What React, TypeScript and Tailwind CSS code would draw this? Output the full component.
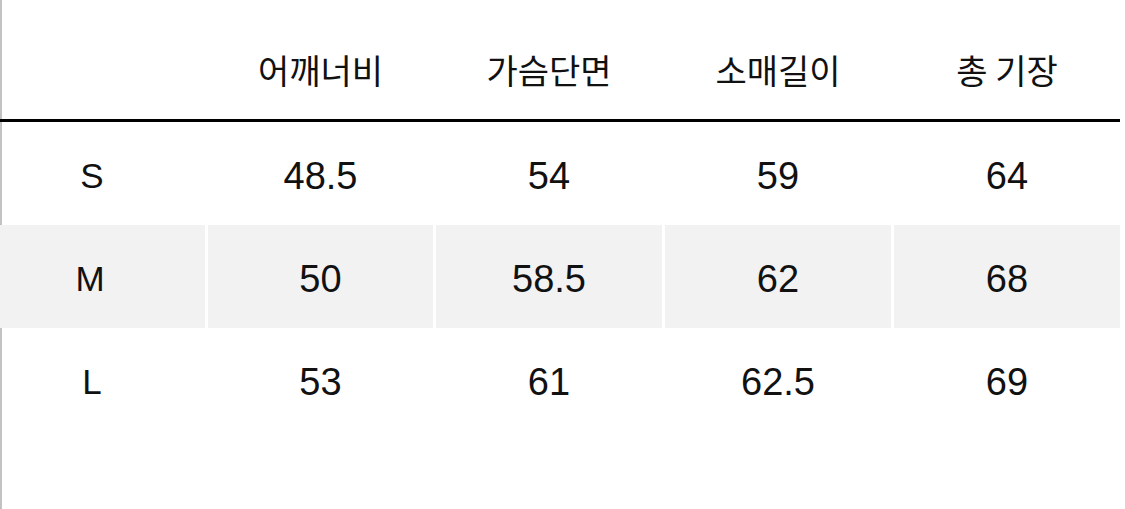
const headers = ['어깨너비', '가슴단면', '소매길이', '총 기장']

const rows = [
  { size: 'S', values: ['48.5', '54', '59', '64'], shaded: false },
  { size: 'M', values: ['50', '58.5', '62', '68'], shaded: true },
  { size: 'L', values: ['53', '61', '62.5', '69'], shaded: false },
]

// bordered rows lose 2px to the left rule, so their first column is 2px narrower
const gridBordered = 'grid grid-cols-[203px_225px_226px_226px_226px] gap-x-[3px] border-l-2 border-[#c2c2c2]'
const gridPlain = 'grid grid-cols-[205px_225px_226px_226px_226px] gap-x-[3px]'

export default function App() {
  return (
    <div className="w-[1125px] h-[509px] bg-white text-[#111] overflow-hidden font-['Liberation_Sans','Noto_Sans_CJK_KR',sans-serif]">
      <div className="w-[1120px]">
        {/* header */}
        <div className={`${gridBordered} h-[119px]`}>
          <div />
          {headers.map((h) => (
            <div
              key={h}
              className="flex items-center justify-center pt-[20px] text-[34px] font-['Noto_Sans_CJK_KR',sans-serif] leading-none"
            >
              {h}
            </div>
          ))}
        </div>
        <div className="h-[3px] bg-black" />

        {rows.map((r) => (
          <div key={r.size} className={`${r.shaded ? gridPlain : gridBordered} h-[103px]`}>
            <div
              className={`flex items-center justify-center pt-[4px] ${r.shaded ? 'pr-[25px] bg-[#f2f2f2]' : 'pr-[23px]'} text-[35px] leading-none`}
            >
              {r.size}
            </div>
            {r.values.map((v, i) => (
              <div
                key={i}
                className={`flex items-center justify-center pt-[4px] text-[38px] leading-none ${r.shaded ? 'bg-[#f2f2f2]' : ''}`}
              >
                {v}
              </div>
            ))}
          </div>
        ))}
      </div>
      <div className="h-[80px] border-l-2 border-[#c2c2c2]" />
    </div>
  )
}
